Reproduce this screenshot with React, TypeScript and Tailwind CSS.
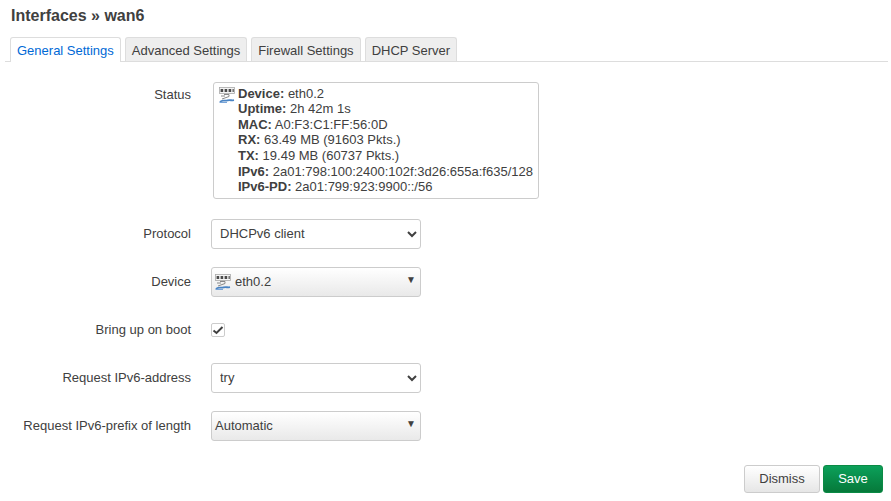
const font = { fontFamily: '"Liberation Sans", Arial, sans-serif' };

function PortIcon() {
  return (
    <svg width="16" height="16" viewBox="0 0 16 16" className="shrink-0">
      <rect x="0.5" y="0.5" width="15" height="6" fill="#f4f4f4" stroke="#a8a8a8" strokeWidth="0.8" />
      <rect x="1.6" y="2" width="2.6" height="3" fill="#4a4a4a" />
      <rect x="5.6" y="2" width="2.6" height="3" fill="#4a4a4a" />
      <rect x="9.6" y="2" width="2.6" height="3" fill="#4a4a4a" />
      <rect x="13.4" y="2" width="1.6" height="3" fill="#777" />
      <path d="M5 7.5 H10 V9.5 L3 12 M2 9 H6" fill="none" stroke="#888" strokeWidth="1" />
      <path d="M1 15 C3 12.5 6 14.4 8.5 13.4 C10.5 12.8 13 13.6 15 13.2" fill="none" stroke="#4a84c4" strokeWidth="1.8" />
      <path d="M0.5 15.5 H8" stroke="#79a5d8" strokeWidth="1" />
    </svg>
  );
}

function Row({ label, children, labelClass }: { label: string; children: React.ReactNode; labelClass?: string }) {
  return (
    <div className="flex">
      <label className={`w-[191px] shrink-0 text-right leading-[20px] ${labelClass ?? "pt-[5px]"}`}>{label}</label>
      <div className="ml-5 flex-1">{children}</div>
    </div>
  );
}

function FakeSelect({ icon, value }: { icon?: boolean; value: string }) {
  return (
    <div className="relative flex h-[30px] w-[210px] items-center rounded-[3px] border border-[#cccccc] bg-linear-to-b from-white to-[#e9e9e9] pl-[3px] text-[13px] text-[#404040]">
      {icon && <PortIcon />}
      <span className={icon ? "ml-[4px]" : ""}>{value}</span>
      <span className="absolute right-[4px] top-[5px] text-[10px] leading-[14px] text-[#404040]">▼</span>
    </div>
  );
}

function NativeSelect({ value }: { value: string }) {
  return (
    <select
      defaultValue={value}
      className="h-[30px] w-[210px] rounded-[3px] border border-[#cccccc] bg-white pb-[2px] pl-[4px] text-[13px] text-[#404040]"
    >
      <option>{value}</option>
    </select>
  );
}

const status: [string, string][] = [
  ["Device:", "eth0.2"],
  ["Uptime:", "2h 42m 1s"],
  ["MAC:", "A0:F3:C1:FF:56:0D"],
  ["RX:", "63.49 MB (91603 Pkts.)"],
  ["TX:", "19.49 MB (60737 Pkts.)"],
  ["IPv6:", "2a01:798:100:2400:102f:3d26:655a:f635/128"],
  ["IPv6-PD:", "2a01:799:923:9900::/56"],
];

const tabs = ["Advanced Settings", "Firewall Settings", "DHCP Server"];

export default function App() {
  return (
    <div className="h-[501px] w-[891px] overflow-hidden bg-white text-[13px] text-[#404040]" style={font}>
      <h2 className="pl-[11px] pt-[6px] text-[16px] font-bold leading-[20px]">Interfaces » wan6</h2>

      <ul className="ml-[5px] mr-[3px] mt-[11px] flex gap-[4px] border-b border-[#dddddd] pl-[5px]">
        <li className="-mb-px h-[25px] rounded-t-[3px] border border-b-0 border-[#dddddd] bg-white px-[6px] leading-[26px] text-[#0069d6]">
          General Settings
        </li>
        {tabs.map((t) => (
          <li key={t} className="h-[24px] rounded-t-[3px] border border-b-0 border-[#dddddd] bg-[#eeeeee] px-[6px] leading-[26px]">
            {t}
          </li>
        ))}
      </ul>

      <div className="mt-[20px] flex flex-col gap-[18px]">
        <div className="mb-[2px]">
          <Row label="Status" labelClass="pt-[3px]">
            <div className="ml-[2px] flex h-[117px] w-[326px] gap-[3px] rounded-[3px] border border-[#cccccc] pl-[5px] pt-[2.7px] leading-[15.6px]">
              <div className="pt-[1px]">
                <PortIcon />
              </div>
              <div>
                {status.map(([k, v]) => (
                  <div key={k} className="whitespace-nowrap">
                    <strong>{k}</strong> {v}
                  </div>
                ))}
              </div>
            </div>
          </Row>
        </div>
        <Row label="Protocol">
          <NativeSelect value="DHCPv6 client" />
        </Row>
        <Row label="Device">
          <FakeSelect icon value="eth0.2" />
        </Row>
        <Row label="Bring up on boot">
          <div className="flex h-[30px] items-center">
            <span className="flex h-[14px] w-[14px] items-center justify-center rounded-[2px] border border-[#cccccc] bg-white">
              <svg width="12" height="12" viewBox="0 0 12 12">
                <path d="M1.5 6.5 L4.5 9 L10.5 3" fill="none" stroke="#404040" strokeWidth="2" />
              </svg>
            </span>
          </div>
        </Row>
        <Row label="Request IPv6-address">
          <NativeSelect value="try" />
        </Row>
        <Row label="Request IPv6-prefix of length">
          <FakeSelect value="Automatic" />
        </Row>
      </div>

      <div className="mr-[8px] mt-[24px] flex justify-end gap-[3px]">
        <button className="h-[28px] w-[76px] rounded-[3px] border border-[#cccccc] bg-linear-to-b from-white to-[#e6e6e6]">
          Dismiss
        </button>
        <button className="h-[28px] w-[60px] rounded-[3px] border border-[#0b8a45] bg-linear-to-b from-[#0ca05a] to-[#06793a] text-white">
          Save
        </button>
      </div>
    </div>
  );
}
